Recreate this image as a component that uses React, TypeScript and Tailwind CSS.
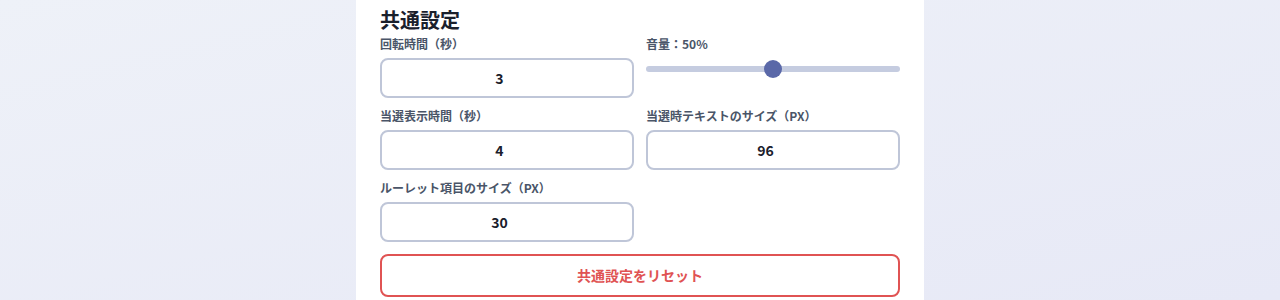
/**
 * Common settings panel
 *
 * Roulette shared settings: timings, sizes, volume and reset.
 */

const font = { fontFamily: '"Noto Sans CJK JP", "Noto Sans", sans-serif' }

function NumberField({ label, value }: { label: string; value: string }) {
  return (
    <div className="flex flex-col">
      <label className="mb-1.5 h-4 text-xs font-bold leading-4 text-[#4a5568]">{label}</label>
      <input
        type="number"
        defaultValue={value}
        className="h-10 w-full rounded-lg border-2 border-[#bfc6d8] bg-white text-center text-sm font-bold text-[#1a202c] outline-none"
      />
    </div>
  )
}

function VolumeSlider({ volume }: { volume: number }) {
  return (
    <div className="flex flex-col">
      <label className="mb-1.5 h-4 text-xs font-bold leading-4 text-[#4a5568]">音量：{volume}%</label>
      <div className="relative flex h-[22px] items-center">
        <div className="h-1.5 w-full rounded-full bg-[#c5cce0]" />
        <div
          className="absolute top-1/2 h-[18px] w-[18px] -translate-x-1/2 -translate-y-1/2 rounded-full bg-[#5a68a8]"
          style={{ left: `${volume}%` }}
        />
      </div>
    </div>
  )
}

export default function App() {
  return (
    <div
      className="flex min-h-[300px] w-full justify-center bg-gradient-to-br from-[#eef1f8] to-[#e7e9f6]"
      style={font}
    >
      <div className="w-[568px] bg-white px-6 pt-1.5">
        <h2 className="mb-0.5 text-xl font-bold leading-7 text-[#1a202c]">共通設定</h2>
        <div className="grid grid-cols-2 gap-x-3 gap-y-[10px]">
          <NumberField label="回転時間（秒）" value="3" />
          <VolumeSlider volume={50} />
          <NumberField label="当選表示時間（秒）" value="4" />
          <NumberField label="当選時テキストのサイズ（PX）" value="96" />
          <NumberField label="ルーレット項目のサイズ（PX）" value="30" />
        </div>
        <button className="mt-3 h-[43px] w-full rounded-lg border-2 border-[#e05353] bg-white pb-0.5 text-sm font-bold text-[#e05353]">
          共通設定をリセット
        </button>
      </div>
    </div>
  )
}
